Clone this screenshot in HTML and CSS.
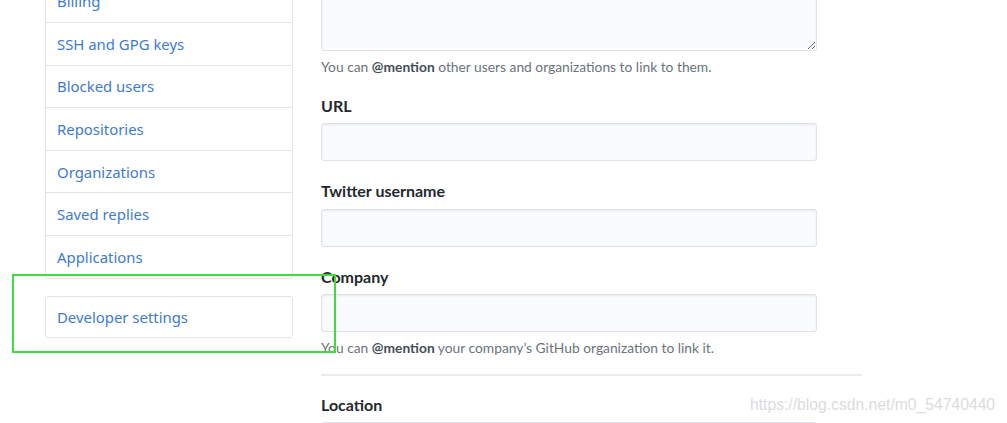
FILE: index.html
```html
<!DOCTYPE html>
<html lang="en">
<head>
<meta charset="utf-8">
<title>Settings</title>
<link rel="stylesheet" href="styles.css">
</head>
<body>
<div class="page">
  <aside class="sidebar">
    <nav class="menu">
      <a class="menu-item" href="#">Billing</a>
      <a class="menu-item" href="#">SSH and GPG keys</a>
      <a class="menu-item" href="#">Blocked users</a>
      <a class="menu-item" href="#">Repositories</a>
      <a class="menu-item" href="#">Organizations</a>
      <a class="menu-item" href="#">Saved replies</a>
      <a class="menu-item" href="#">Applications</a>
    </nav>
    <nav class="menu menu-dev">
      <a class="menu-item" href="#">Developer settings</a>
    </nav>
    <div class="highlight"></div>
  </aside>
  <main class="main">
    <div class="field field-bio">
      <textarea class="textarea"></textarea>
      <p class="note">You can <strong>@mention</strong> other users and organizations to link to them.</p>
    </div>
    <div class="field">
      <label class="label">URL</label>
      <input class="input" type="text">
    </div>
    <div class="field">
      <label class="label">Twitter username</label>
      <input class="input" type="text">
    </div>
    <div class="field">
      <label class="label">Company</label>
      <input class="input" type="text">
      <p class="note">You can <strong>@mention</strong> your company’s GitHub organization to link it.</p>
    </div>
    <hr class="divider">
    <div class="field">
      <label class="label">Location</label>
      <input class="input" type="text">
    </div>
  </main>
  <div class="watermark">https://blog.csdn.net/m0_54740440</div>
</div>
</body>
</html>
```
FILE: styles.css
```css
html, body {
  margin: 0;
  padding: 0;
  background: #ffffff;
  overflow: hidden;
}

body {
  font-family: "Noto Sans", "Open Sans", sans-serif;
  color: #24292e;
  width: 1007px;
  height: 423px;
}

.page {
  position: relative;
  display: flex;
  align-items: flex-start;
  height: 423px;
  padding-left: 45px;
  box-sizing: border-box;
}

.sidebar {
  width: 248px;
  flex: none;
  margin-top: -20.6px;
}

.menu {
  border: 1px solid #e1e4e8;
  border-radius: 3px;
  display: flex;
  flex-direction: column;
  background: #fff;
}

.menu-item {
  display: flex;
  align-items: center;
  height: 41.6px;
  padding: 0 11px;
  font-size: 14.9px;
  color: #3d7bd0;
  text-decoration: none;
  border-bottom: 1px solid #e1e4e8;
}

.menu-item:last-child {
  border-bottom: none;
}

.menu-dev {
  margin-top: 17.4px;
}

.menu-dev .menu-item {
  height: 40px;
}

.highlight {
  position: absolute;
  left: 12px;
  top: 274px;
  width: 320px;
  height: 75px;
  border: 2px solid #3fde3f;
  pointer-events: none;
}

.main {
  margin-left: 28px;
  width: 541px;
  flex: none;
  display: flex;
  flex-direction: column;
}

.field {
  display: flex;
  flex-direction: column;
  width: 496px;
  margin-bottom: 18px;
}

.field-bio {
  margin-top: -49px;
  margin-bottom: 17.3px;
}

.textarea {
  display: block;
  box-sizing: border-box;
  width: 496px;
  height: 100px;
  background: #fafbfc;
  border: 1px solid #dfe2e6;
  border-radius: 3px;
  box-shadow: inset 0 1px 2px rgba(27, 31, 35, 0.075);
  margin: 0;
}

.label {
  display: block;
  height: 24px;
  line-height: 24px;
  font-family: Lato, "Noto Sans", sans-serif;
  font-size: 16px;
  font-weight: 700;
  color: #24292e;
  margin-bottom: 5.5px;
}

.input {
  display: block;
  box-sizing: border-box;
  width: 496px;
  height: 38px;
  margin: 0;
  background: #fafbfc;
  border: 1px solid #dfe2e6;
  border-radius: 3px;
  box-shadow: inset 0 1px 2px rgba(27, 31, 35, 0.075);
}

.note {
  margin: 5.5px 0 0;
  height: 20px;
  line-height: 20px;
  font-family: Lato, "Noto Sans", sans-serif;
  font-size: 13.8px;
  color: #6a737d;
}

.note strong {
  color: #444d56;
  font-weight: 700;
}

.divider {
  width: 541px;
  height: 0;
  margin: -1.5px 0 16.5px;
  border: none;
  border-top: 2px solid #e9ebee;
}

.watermark {
  position: absolute;
  left: 750px;
  top: 396px;
  font-family: "Liberation Sans", Arial, sans-serif;
  font-size: 15.7px;
  color: #dcdcdc;
  white-space: nowrap;
}
```
